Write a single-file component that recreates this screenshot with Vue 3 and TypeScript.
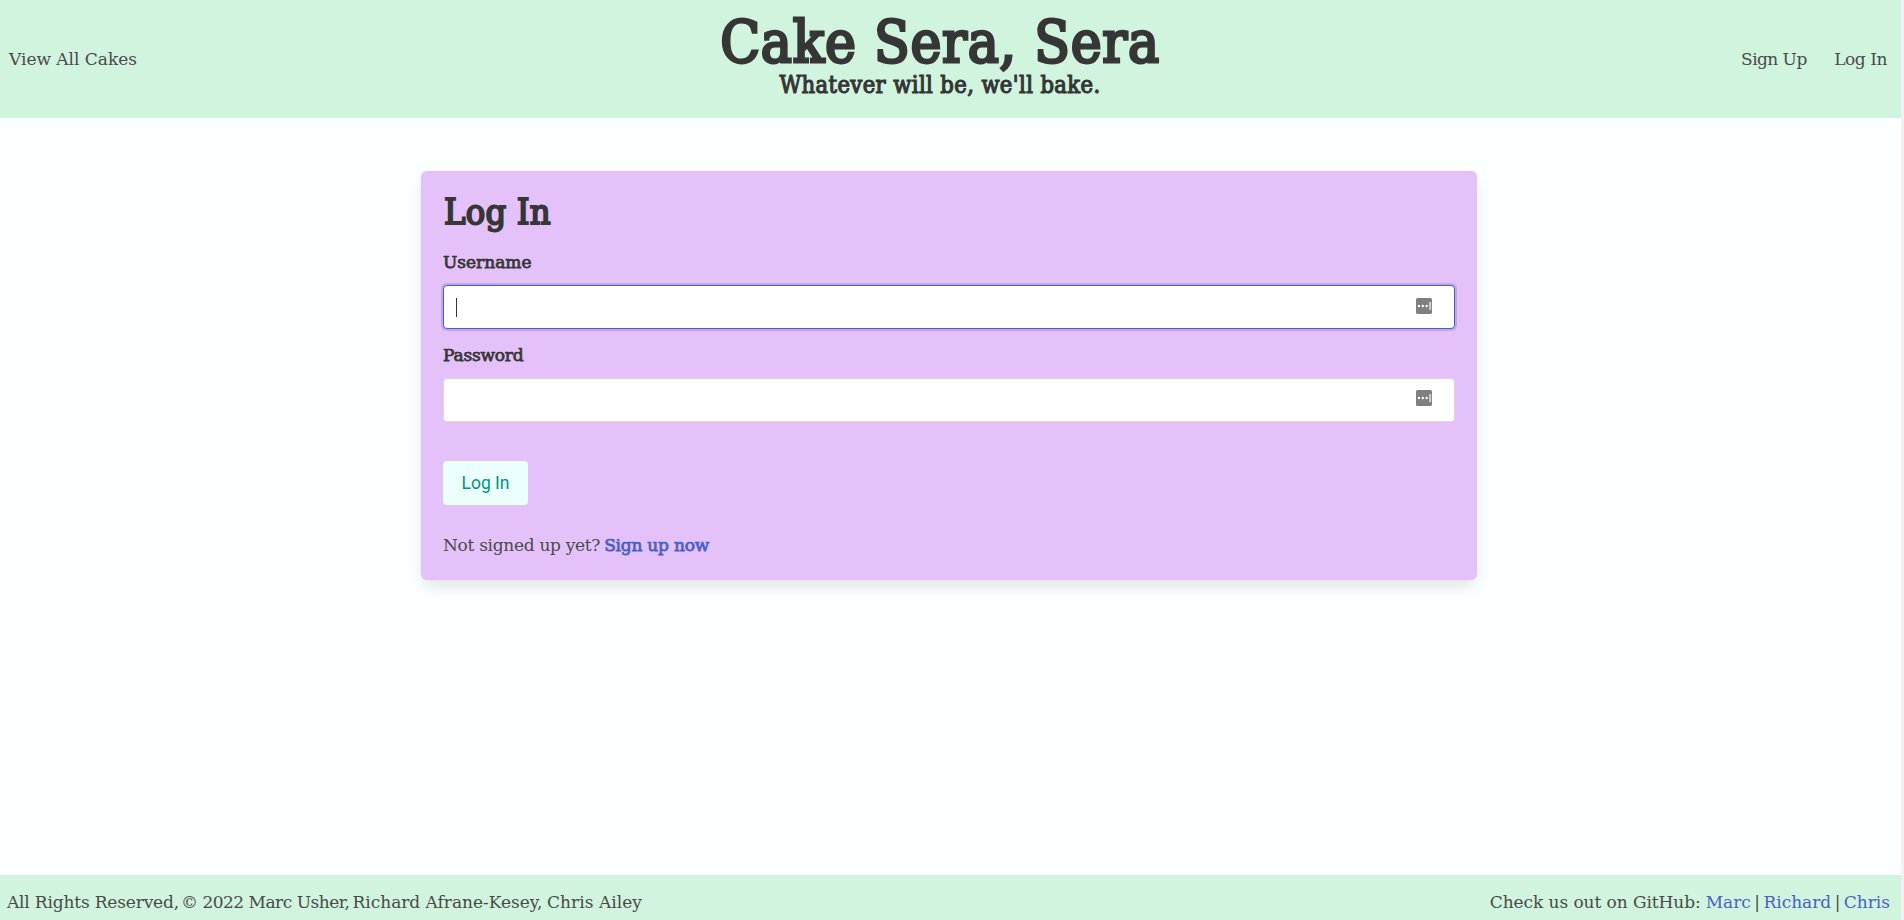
<script setup lang="ts">
import { ref } from 'vue'

interface Field { id: string; label: string; type: string }
interface Author { name: string; cls: string }

const fields: Field[] = [
  { id: 'username', label: 'Username', type: 'text' },
  { id: 'password', label: 'Password', type: 'password' },
]
const authors: Author[] = [
  { name: 'Marc', cls: 'marc' },
  { name: 'Richard', cls: 'richard' },
  { name: 'Chris', cls: 'chris' },
]
const credits: string[] = ['All Rights Reserved,', '© 2022 Marc Usher,', 'Richard Afrane-Kesey,', 'Chris Ailey']
const active = ref('username')
const values = ref<Record<string, string>>({ username: '', password: '' })
</script>

<template>
  <div class="window">
    <div class="page">
      <header class="header">
        <nav class="nav-left"><a class="view">View All Cakes</a></nav>
        <div class="brand">
          <h1 class="title">Cake Sera, Sera</h1>
          <h2 class="tagline">Whatever will be, we'll bake.</h2>
        </div>
        <nav class="nav-right"><a class="signup">Sign Up</a><a class="login">Log In</a></nav>
      </header>

      <main class="main">
        <form class="card" @submit.prevent>
          <h2 class="heading">Log In</h2>
          <div v-for="f in fields" :key="f.id" class="field">
            <label :for="f.id" :class="f.id">{{ f.label }}</label>
            <div class="control" :class="{ focused: active === f.id }">
              <span v-if="active === f.id && !values[f.id]" class="caret"></span>
              <input :id="f.id" v-model="values[f.id]" :type="f.type" @focus="active = f.id" />
              <svg class="key" viewBox="0 0 16 16" width="16" height="16">
                <rect width="16" height="16" rx="1.6" fill="#808080" />
                <circle cx="2.9" cy="8" r="1.2" fill="#fff" />
                <circle cx="6.8" cy="8" r="1.2" fill="#fff" />
                <circle cx="10.7" cy="8" r="1.2" fill="#fff" />
                <rect x="13" y="4" width="2.2" height="8" fill="#c8c8c8" />
              </svg>
            </div>
          </div>
          <button class="submit" type="submit">Log In</button>
          <p class="prompt"><span>Not signed up yet?</span><a>Sign up now</a></p>
        </form>
      </main>

      <footer class="footer">
        <p class="rights"><span v-for="c in credits" :key="c">{{ c }}</span></p>
        <p class="github">
          <span class="check">Check us out on GitHub:</span>
          <template v-for="(a, i) in authors" :key="a.name">
            <i v-if="i > 0" class="bar">|</i>
            <a :class="a.cls">{{ a.name }}</a>
          </template>
        </p>
      </footer>
    </div>
    <div class="gutter"></div>
  </div>
</template>

<style>
body { margin: 0; overflow: hidden; }
</style>

<style scoped>
* { box-sizing: border-box; }
h1, h2, p { margin: 0; font-weight: 400; }
.window {
  display: flex;
  height: 920px;
  font: 17px/26px "DejaVu Serif", serif;
  color: #4a4a4a;
  background: #fbffff;
}
.page { flex: 1; display: flex; flex-direction: column; }
.gutter { width: 3px; background: #f1f1f1; }
.header {
  display: grid;
  grid-template-columns: 1fr 438px 1fr;
  height: 118px;
  padding: 0 14px 0 9px;
  background: #d0f4de;
}
.nav-left, .nav-right { display: flex; align-items: center; white-space: nowrap; padding-bottom: 1px; }
.nav-right { justify-content: flex-end; }
.view { letter-spacing: -0.02px; }
.signup { letter-spacing: -0.55px; margin-right: 27.5px; }
.login { letter-spacing: -0.45px; }
.brand {
  display: flex;
  flex-direction: column;
  align-items: center;
  padding-top: 13px;
  margin: 0 8px 0 -8px;
  color: #363636;
  font-family: "DejaVu Serif Condensed", "DejaVu Serif", serif;
  white-space: nowrap;
}
.title {
  font-size: 58px;
  line-height: 59px;
  letter-spacing: 0.75px;
  -webkit-text-stroke: 2.8px #363636;
}
.tagline {
  font-size: 23.5px;
  line-height: 27px;
  letter-spacing: 0.4px;
  -webkit-text-stroke: 1.1px #363636;
}
.main { flex: 1; padding: 53px 0 0 421px; }
.card {
  width: 1056px;
  height: 409px;
  padding: 22px;
  border-radius: 6px;
  background: #e4c1f9;
  box-shadow: 0 8px 16px -2px rgba(10, 10, 10, 0.1), 0 0 0 1px rgba(10, 10, 10, 0.02);
}
.heading {
  font: 36px/38px "DejaVu Serif Condensed", "DejaVu Serif", serif;
  letter-spacing: 0.2px;
  -webkit-text-stroke: 1.9px #363636;
  color: #363636;
  padding-left: 1px;
  margin-bottom: 18px;
}
.field { height: 93px; }
.field label {
  display: block;
  height: 36px;
  color: #363636;
  -webkit-text-stroke: 0.75px #363636;
}
.password { letter-spacing: -0.2px; }
.control {
  display: flex;
  align-items: center;
  width: 1012px;
  height: 44px;
  padding: 0 22px 0 12px;
  border: 1px solid #dbdbdb;
  border-radius: 4px;
  background: #fff;
  box-shadow: inset 0 1px 2px rgba(10, 10, 10, 0.05);
}
.control.focused { border-color: #485fc7; box-shadow: 0 0 0 2px rgba(72, 95, 199, 0.25); }
.caret { width: 1px; height: 19px; background: #363636; }
.control input {
  flex: 1;
  min-width: 0;
  height: 30px;
  padding: 0;
  border: 0;
  outline: 0;
  background: transparent;
  font: 17.5px "Noto Sans", sans-serif;
  color: #363636;
}
.key { margin-bottom: 3px; }
#password + .key { margin-bottom: 5px; }
.submit {
  display: block;
  width: 85px;
  height: 44px;
  margin-top: 26px;
  padding: 0;
  border: 0;
  border-radius: 4px;
  background: #ebfffc;
  color: #00947e;
  font: 17.5px/44px Roboto, "Noto Sans", sans-serif;
}
.prompt { margin-top: 27px; white-space: nowrap; }
.prompt span { letter-spacing: -0.3px; margin-right: 4px; }
.prompt a { letter-spacing: -0.22px; color: #485fc7; -webkit-text-stroke: 0.75px #485fc7; }
.footer {
  display: flex;
  justify-content: space-between;
  height: 45px;
  padding: 14px 11px 0 7px;
  background: #d0f4de;
  white-space: nowrap;
}
.rights {
  display: grid;
  grid-template-columns: 174px 171.5px 194.5px auto;
  letter-spacing: -0.17px;
}
.rights span:nth-child(2) { letter-spacing: -0.5px; }
.rights span:nth-child(3) { letter-spacing: -0.02px; }
.rights span:nth-child(4) { letter-spacing: 0.05px; }
.github { display: flex; }
.github a { color: #485fc7; }
.check { letter-spacing: -0.07px; margin-right: 5px; }
.bar { width: 12.5px; text-align: center; font-style: normal; }
</style>
